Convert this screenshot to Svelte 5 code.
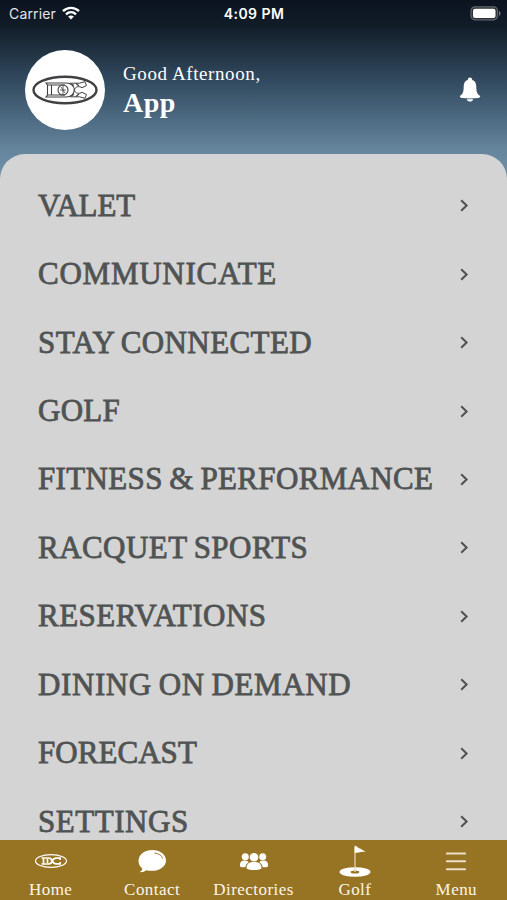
<script>
    const menu = [
        { label: 'VALET', spacing: -0.1 },
        { label: 'COMMUNICATE', spacing: 0.75 },
        { label: 'STAY CONNECTED', spacing: 0.4 },
        { label: 'GOLF', spacing: 0.25 },
        { label: 'FITNESS & PERFORMANCE', spacing: 0.35 },
        { label: 'RACQUET SPORTS', spacing: 0.45 },
        { label: 'RESERVATIONS', spacing: 0.5 },
        { label: 'DINING ON DEMAND', spacing: 0.6 },
        { label: 'FORECAST', spacing: 0.05 },
        { label: 'SETTINGS', spacing: 0.55 }
    ];
    const tabs = ['Home', 'Contact', 'Directories', 'Golf', 'Menu'];
</script>

<div class="screen">
    <div class="statusBar">
        <div class="carrier">
            <span>Carrier</span>
            <svg width="18" height="14" viewBox="0 0 18 14" fill="none" stroke="#fff" stroke-width="2.4">
                <path d="M1 5.2C5.6.7 12.4.7 17 5.2M4 8.4c3-2.8 7-2.8 10 0" />
                <path d="M9 13.4 6.1 10.6c1.7-1.5 4.1-1.5 5.8 0Z" fill="#fff" stroke="none" />
            </svg>
        </div>
        <span class="time">4:09 PM</span>
        <svg class="battery" width="31" height="15" viewBox="0 0 31 15">
            <rect x="1" y=".8" width="26.5" height="13" rx="4" fill="#2b3036" stroke="#63676c" stroke-width="1.2" />
            <rect x="3" y="2.7" width="22.5" height="9.2" rx="2" fill="#fff" />
            <path d="M29 5c2 .8 2 4 0 4.8Z" fill="#777b80" />
        </svg>
    </div>

    <header>
        <div class="avatar">
            <svg width="66" height="30" viewBox="0 0 66 30" fill="none" stroke="#414042">
                <ellipse cx="33" cy="15" rx="31.5" ry="13.3" stroke-width="2.4" />
                <path d="M14 8h20c11 0 11 14 0 14H14l1.500-2V10ZM19.500 10v10M15.500 10H33M15.500 20H33" stroke-width="1.1" />
                <circle cx="31" cy="15" r="5" stroke-width="1.100" />
                <path d="M31 10v10M28 15h6M29 12l4 6" stroke-width=".8" />
                <path d="M38 8.200h9.500l5.500-1.500 1.500 3.800-4.500 2.200c-2.500-1.700-7-1.500-7.500 2.300.5 3.800 5 4 7.500 2.300l4.500 2.200-1.500 3.800-5.500-1.500H38" stroke-width="1" />
                <path d="m39 9 3 1.500M44 8.500l3 2.500M39 21l3-1.500M44 21.500l3-2.500" stroke-width="1.100" />
            </svg>
        </div>
        <div class="greeting">
            <div class="hello">Good Afternoon,</div>
            <div class="name">App</div>
        </div>
        <svg class="bell" width="22" height="26" viewBox="0 0 22 26" fill="#fff">
            <circle cx="11" cy="2.800" r="2.200" />
            <path d="M11 2.800c5 0 6.200 3.200 6.300 7.200.1 5 .9 6.900 3.300 8.500 1.400 1-.2 2.400-1.800 2.500-5 .5-10.600.5-15.600 0-1.600-.1-3.200-1.500-1.800-2.500C3.800 16.900 4.600 15 4.700 10c.1-4 1.300-7.200 6.300-7.200Z" />
            <path d="M7.800 22.200h6.400c-.5 3.200-5.900 3.200-6.400 0Z" />
        </svg>
    </header>

    <main>
        {#each menu as item}
            <div class="row">
                <span class="label" style="letter-spacing: {item.spacing}px">{item.label}</span>
                <svg width="10" height="14" viewBox="0 0 10 14" fill="none" stroke="#4f5252" stroke-width="2">
                    <path d="M2.200 2.300 7.600 7.500 2.200 12.700" />
                </svg>
            </div>
        {/each}
    </main>

    <nav>
        {#each tabs as tab}
            <div class="tab">
                <svg width="36" height="34" viewBox="0 0 36 34" fill="#fff">
                    {#if tab == 'Home'}
                        <ellipse cx="18" cy="17" rx="15.500" ry="6.300" fill="none" stroke="#fff" stroke-width="1.200" />
                        <path d="M8.500 14h7c4.500.3 4.500 5.700 0 6h-7M10.500 14v6M14.500 15v4M28 14.200h-5c-4.500.5-4.500 5.100 0 5.600h5M27 14.500v1.500M27 18v1.500" fill="none" stroke="#fff" stroke-width="1.700" />
                    {:else if tab == 'Contact'}
                        <path d="M18.500 6C10.500 6 4.500 10.500 4.500 17c0 3.200 1.500 5.600 3.700 7.300.1 1.600-.8 2.900-2.500 3.800 2.500.3 4.800-.4 6.500-1.900C22 28.500 32 24.500 32 16.500 32 10.300 26 6 18.500 6Z" />
                        <path d="M20.500 9c4.500.5 7.300 2.500 8.200 5.500" fill="none" stroke="#977423" stroke-width=".9" />
                    {:else if tab == 'Directories'}
                        <circle cx="9.300" cy="12.700" r="3.500" />
                        <circle cx="26.700" cy="12.700" r="3.500" />
                        <path d="M4.300 22.700c-1.300-4 1-6.500 4.700-6.300 2 .1 3 .9 3.700 1.900-1.900 1.200-3 2.700-3.300 4.800-2 .4-3.600.2-5.100-.4ZM31.700 22.700c1.300-4-1-6.500-4.700-6.300-2 .1-3 .9-3.700 1.900 1.900 1.200 3 2.700 3.300 4.800 2 .4 3.600.2 5.100-.4Z" />
                        <circle cx="18" cy="13.300" r="4.300" />
                        <path d="M10.600 24.500c-.3-4.500 2.500-6.400 7.400-6.400s7.700 1.900 7.400 6.400c-3 2-11.800 2-14.800 0Z" />
                    {:else if tab == 'Golf'}
                        <ellipse cx="18" cy="28" rx="15.500" ry="4.800" />
                        <ellipse cx="18" cy="28" rx="4.300" ry="1.500" fill="#977423" />
                        <path d="M18 3v25" stroke="#e5d9bd" stroke-width="1.200" />
                        <path d="M17.700 1.500c2.800.8 3.300 2.800 6 3.300l5.500 3.400c-3-.6-5-.5-7.500.2-1.500.4-2.500.4-4 .3Z" />
                    {:else}
                        <path d="M8.800 9.500h18.400M8.800 17.300h18.400M8.800 25.200h18.400" stroke="#eadfc9" stroke-width="1.900" stroke-linecap="round" />
                    {/if}
                </svg>
                <span class="tabLabel">{tab}</span>
            </div>
        {/each}
    </nav>
</div>

<style>
    :global(body) {
        margin: 0;
    }
    .screen {
        display: flex;
        flex-direction: column;
        width: 507px;
        height: 900px;
        overflow: hidden;
        color: #fff;
        font-family: "Liberation Serif", serif;
        background: linear-gradient(to bottom, #0b131f 0, #111c28 25px, #1d2d3b 45px, #2d4357 72px, #3c566c 95px, #4e6c83 120px, #64849c 148px, #6f91a8 180px);
    }
    .statusBar {
        display: grid;
        grid-template-columns: 1fr auto 1fr;
        align-items: center;
        height: 28px;
        padding: 0 8px 2px 9px;
        font-family: Inter, sans-serif;
        font-size: 14px;
        box-sizing: border-box;
        flex: none;
    }
    .carrier {
        display: flex;
        align-items: center;
        gap: 6px;
        color: #e3e5e8;
        letter-spacing: 0.15px;
    }
    .time {
        font-weight: 600;
        letter-spacing: 0.45px;
    }
    .battery {
        justify-self: end;
        margin-right: -2px;
    }
    header {
        display: flex;
        align-items: center;
        flex: none;
        height: 125.5px;
        padding: 0 26px 1.5px 25px;
        box-sizing: border-box;
    }
    .avatar {
        display: flex;
        align-items: center;
        justify-content: center;
        width: 80px;
        height: 80px;
        border-radius: 50%;
        background: #fff;
    }
    .greeting {
        flex: 1;
        padding: 2px 0 0 18px;
    }
    .hello {
        font-size: 19px;
        line-height: 24px;
        letter-spacing: 0.6px;
    }
    .name {
        font-size: 28px;
        line-height: 34px;
        font-weight: bold;
        letter-spacing: 0.5px;
    }
    main {
        flex: 1;
        min-height: 0;
        overflow: hidden;
        padding: 17.5px 38px 0 38px;
        border-radius: 25px 25px 0 0;
        background: #d4d4d4;
    }
    .row {
        display: flex;
        align-items: center;
        justify-content: space-between;
        height: 68.45px;
    }
    .label {
        padding-top: 1px;
        color: #505353;
        font-size: 31px;
        line-height: 34px;
        white-space: nowrap;
        word-spacing: -1.5px;
        -webkit-text-stroke: 0.8px #505353;
    }
    nav {
        display: flex;
        flex: none;
        height: 60px;
        background: #977423;
    }
    .tab {
        display: flex;
        flex: 1;
        flex-direction: column;
        align-items: center;
        padding-top: 4px;
    }
    .tab svg {
        flex: none;
    }
    .tabLabel {
        font-size: 17px;
        line-height: 20px;
        letter-spacing: 0.45px;
        margin-top: 2px;
        color: #fbf6ea;
    }
</style>
